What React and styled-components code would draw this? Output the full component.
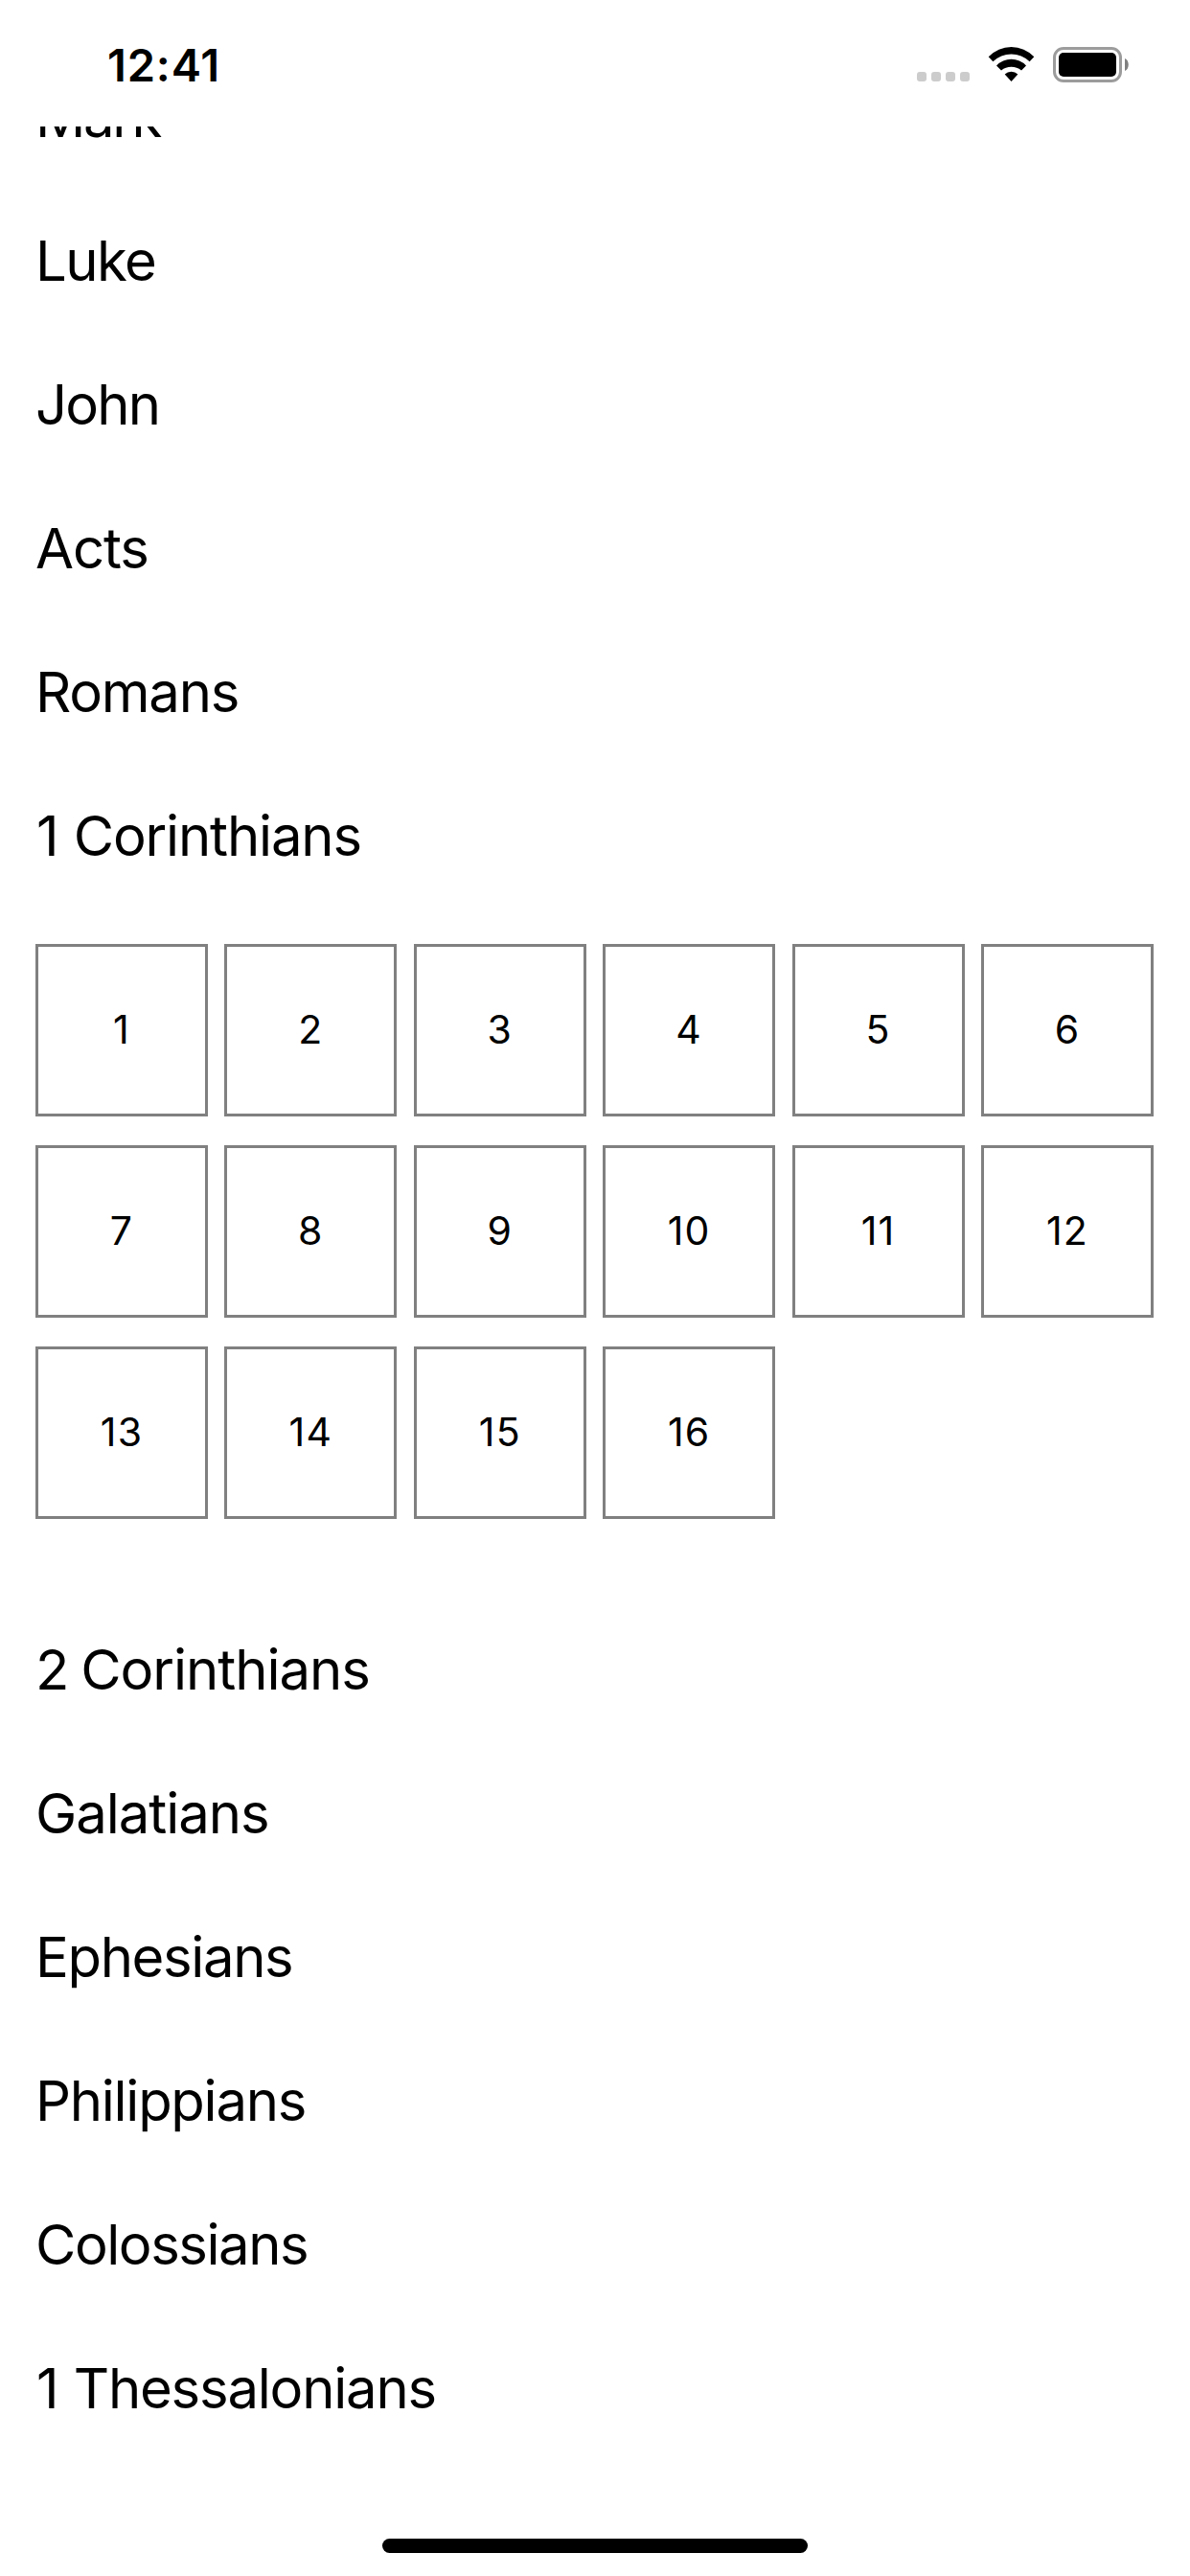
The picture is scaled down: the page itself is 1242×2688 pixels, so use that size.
import React from "react";
import styled, { createGlobalStyle } from "styled-components";

const GlobalStyle = createGlobalStyle`
  *, *::before, *::after { box-sizing: border-box; }
  body { margin: 0; background: #fff; }
`;

const Screen = styled.div`
  display: flex;
  flex-direction: column;
  width: 1242px;
  height: 2688px;
  overflow: hidden;
  background: #fff;
  color: #000;
  font-family: Inter, "Liberation Sans", sans-serif;
`;

const StatusBar = styled.header`
  display: flex;
  flex: none;
  justify-content: space-between;
  align-items: flex-start;
  height: 132px;
  padding: 39px 63px 0 112px;
`;

const Clock = styled.time`
  font-size: 47px;
  font-weight: 600;
  line-height: 57px;
  letter-spacing: 0.85px;
`;

const StatusIcons = styled.div`
  display: flex;
  padding-top: 1px;
`;

const Books = styled.main`
  flex: 1;
  min-height: 0;
  overflow: hidden;
`;

/* The list is scrolled so that its first row is partly above the viewport. */
const BookList = styled.ul`
  list-style: none;
  margin: -85px 0 0;
  padding: 0 37px;
`;

const BookName = styled.div`
  height: 150px;
  font-size: 58px;
  line-height: 150px;
  letter-spacing: ${(p) => p.$tracking}px;
  word-spacing: ${(p) => p.$wordGap || 0}px;
  text-indent: ${(p) => p.$indent || 0}px;
  white-space: nowrap;
`;

const Chapters = styled.div`
  display: grid;
  grid-template-columns: repeat(6, 180px);
  grid-auto-rows: 180px;
  gap: 30px 17.4px;
  padding: 38px 0 82px;
`;

const Chapter = styled.button`
  display: flex;
  align-items: center;
  justify-content: center;
  padding: 0 0 2px;
  border: 3px solid #808080;
  background: transparent;
  color: inherit;
  font: 400 41px/50px Inter, "Liberation Sans", sans-serif;
  letter-spacing: 1.2px;
`;

const HomeArea = styled.footer`
  display: flex;
  flex: none;
  justify-content: center;
  height: 39px;
`;

const HomeIndicator = styled.div`
  width: 444px;
  height: 15px;
  border-radius: 8px;
  background: #000;
`;

const books = [
  { name: "Mark", tracking: -2.4 },
  { name: "Luke", tracking: -1.5 },
  { name: "John", tracking: -1.85 },
  { name: "Acts", tracking: -1.1 },
  { name: "Romans", tracking: -1.24 },
  { name: "1 Corinthians", tracking: -1.16, wordGap: 1.1, indent: 1, chapters: 16 },
  { name: "2 Corinthians", tracking: -1.05, wordGap: -2.3 },
  { name: "Galatians", tracking: -1.04 },
  { name: "Ephesians", tracking: -1.37 },
  { name: "Philippians", tracking: -1.27 },
  { name: "Colossians", tracking: -1.45 },
  { name: "1 Thessalonians", tracking: -1.21, wordGap: 1.2, indent: 1 },
];

const StatusGlyphs = () => (
  <svg width="222" height="48" viewBox="957 40 222 48" aria-hidden="true">
    {[957, 972, 987, 1002].map((x) => (
      <rect key={x} x={x} y="75" width="10" height="10" rx="3" fill="#ccc" />
    ))}
    <path d="M1031.7 59.3 A32.8 32.8 0 0 1 1079.3 59.3 L1074.6 64.3 A27.2 27.2 0 0 0 1036.4 64.3 Z" />
    <path d="M1040 68.4 A21.5 21.5 0 0 1 1071 68.4 L1066 73.5 A16.5 16.5 0 0 0 1045 73.5 Z" />
    <path d="M1048.7 77.6 A9.4 9.4 0 0 1 1062.3 77.6 L1055.5 85 Z" />
    <rect x="1100.5" y="50.5" width="69" height="34" rx="9.5" fill="none" stroke="#9c9c9c" strokeWidth="3" />
    <rect x="1105" y="55" width="60" height="25" rx="5" />
    <path d="M1174 61 C1179 63 1179 72 1174 74 Z" fill="#808080" />
  </svg>
);

export default function App() {
  return (
    <Screen>
      <GlobalStyle />
      <StatusBar>
        <Clock>12:41</Clock>
        <StatusIcons>
          <StatusGlyphs />
        </StatusIcons>
      </StatusBar>
      <Books>
        <BookList>
          {books.map((book) => (
            <li key={book.name}>
              <BookName $tracking={book.tracking} $wordGap={book.wordGap} $indent={book.indent}>
                {book.name}
              </BookName>
              {book.chapters && (
                <Chapters>
                  {Array.from({ length: book.chapters }, (_, i) => (
                    <Chapter key={i}>{i + 1}</Chapter>
                  ))}
                </Chapters>
              )}
            </li>
          ))}
        </BookList>
      </Books>
      <HomeArea>
        <HomeIndicator />
      </HomeArea>
    </Screen>
  );
}
